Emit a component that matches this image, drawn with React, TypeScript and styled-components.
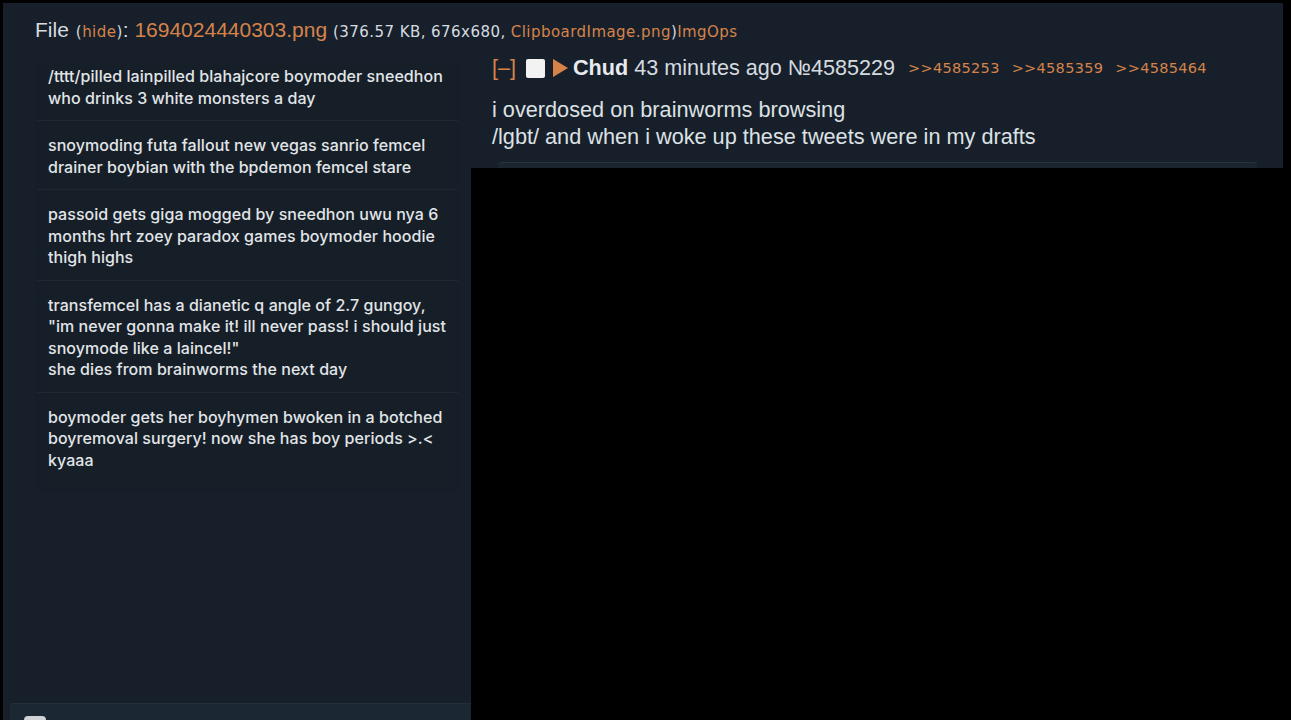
import React from 'react'
import styled, { createGlobalStyle } from 'styled-components'

const GlobalStyle = createGlobalStyle`
  html, body {
    margin: 0;
    padding: 0;
    background: #000;
    height: 720px;
    overflow: hidden;
  }
`

const Page = styled.div`
  position: relative;
  height: 720px;
  padding: 3px 8px 0 3px;
  box-sizing: border-box;
`

const Panel = styled.div`
  height: 100%;
  background: #17202a;
  display: flex;
  flex-direction: column;
  font-family: 'Liberation Sans', Arial, sans-serif;
  color: #d6dbe0;
`

const FileLine = styled.div`
  display: flex;
  align-items: baseline;
  padding: 15px 0 0 32px;
  height: 27px;
  font-size: 21px;
  white-space: nowrap;
`

const Label = styled.span`
  margin-right: 7px;
`

const Small = styled.span`
  font-family: 'DejaVu Sans', Verdana, sans-serif;
  font-size: 15px;
  letter-spacing: 0.45px;
`

const Link = styled.span`
  color: #d6834a;
`

const Body = styled.div`
  flex: 1;
  display: flex;
  padding-left: 32px;
`

const TweetShot = styled.div`
  width: 425px;
  flex-shrink: 0;
  margin-top: 18px;
  background: #161f28;
  font-family: Inter, 'Open Sans', sans-serif;
  font-weight: 500;
  font-size: 16px;
  line-height: 21.5px;
  letter-spacing: 0.05px;
  color: #e2e5e8;
  align-self: flex-start;
  padding-bottom: 10px;
`

const Tweet = styled.div<{ last?: boolean }>`
  padding: 3px 11px 11px;
  margin: 0 2px;
  border-bottom: ${({ last }) => (last ? 'none' : '1px solid #1f2831')};
  & + & {
    padding-top: 14px;
  }
`

const Post = styled.div`
  flex: 1;
  padding: 10px 0 0 32px;
`

const PostHead = styled.div`
  display: flex;
  align-items: center;
  gap: 8px;
  height: 26px;
  font-size: 21.6px;
  white-space: nowrap;
`

const Box = styled.span`
  width: 19px;
  height: 19px;
  background: #f2f2f2;
  border-radius: 2px;
  margin-left: 2px;
`

const Tri = styled.span`
  width: 0;
  height: 0;
  border-top: 9px solid transparent;
  border-bottom: 9px solid transparent;
  border-left: 15px solid #d6834a;
  margin-right: -3px;
`

const Name = styled.b`
  color: #e8ebee;
`

const Backlinks = styled.span`
  display: flex;
  gap: 12px;
  margin-left: 5px;
  font-family: 'DejaVu Sans', Verdana, sans-serif;
  font-size: 14.5px;
  letter-spacing: 0.3px;
  color: #d6834a;
`

const Message = styled.div`
  margin-top: 16px;
  font-size: 21.7px;
  line-height: 26.5px;
  color: #dde1e5;
`

const Quote = styled.div`
  margin: 12px 26px 0 6px;
  height: 8px;
  border-top: 1px solid #26343e;
  border-radius: 4px 4px 0 0;
  background: #1a252f;
`

const NextPost = styled.div`
  height: 17px;
  margin-left: 7px;
  background: #1b2833;
  border-top: 1px solid #213039;
  border-radius: 3px 0 0 0;
  padding: 12px 0 0 14px;
  box-sizing: border-box;
`

const NextBox = styled.div`
  width: 22px;
  height: 8px;
  background: #cfd3d8;
  border-radius: 4px 4px 0 0;
`

const Video = styled.div`
  position: absolute;
  left: 471px;
  top: 168px;
  right: 0;
  bottom: 0;
  background: #000;
`

const tweets = [
  ['/tttt/pilled lainpilled blahajcore boymoder sneedhon', 'who drinks 3 white monsters a day'],
  ['snoymoding futa fallout new vegas sanrio femcel', 'drainer boybian with the bpdemon femcel stare'],
  [
    'passoid gets giga mogged by sneedhon uwu nya 6',
    'months hrt zoey paradox games boymoder hoodie',
    'thigh highs',
  ],
  [
    'transfemcel has a dianetic q angle of 2.7 gungoy,',
    '"im never gonna make it! ill never pass! i should just',
    'snoymode like a laincel!"',
    'she dies from brainworms the next day',
  ],
  [
    'boymoder gets her boyhymen bwoken in a botched',
    'boyremoval surgery! now she has boy periods >.<',
    'kyaaa',
  ],
]

const App = () => {
  return (
    <>
      <GlobalStyle />
      <Page>
        <Panel>
          <FileLine>
            <Label>File</Label>
            <Small>(<Link>hide</Link>)</Small>:&nbsp;
            <Link>1694024440303.png</Link>&nbsp;
            <Small>
              (376.57 KB, 676x680, <Link>ClipboardImage.png</Link>)<Link>ImgOps</Link>
            </Small>
          </FileLine>
          <Body>
            <TweetShot>
              {tweets.map((lines, i) => (
                <Tweet key={i} last={i === tweets.length - 1}>
                  {lines.map((l, j) => (
                    <div key={j}>{l}</div>
                  ))}
                </Tweet>
              ))}
            </TweetShot>
            <Post>
              <PostHead>
                <Link>[–]</Link>
                <Box />
                <Tri />
                <span>
                  <Name>Chud</Name> 43 minutes ago №4585229
                </span>
                <Backlinks>
                  <span>&gt;&gt;4585253</span>
                  <span>&gt;&gt;4585359</span>
                  <span>&gt;&gt;4585464</span>
                </Backlinks>
              </PostHead>
              <Message>
                i overdosed on brainworms browsing
                <br />
                /lgbt/ and when i woke up these tweets were in my drafts
              </Message>
              <Quote />
            </Post>
          </Body>
          <NextPost>
            <NextBox />
          </NextPost>
        </Panel>
        <Video />
      </Page>
    </>
  )
}

export default App
